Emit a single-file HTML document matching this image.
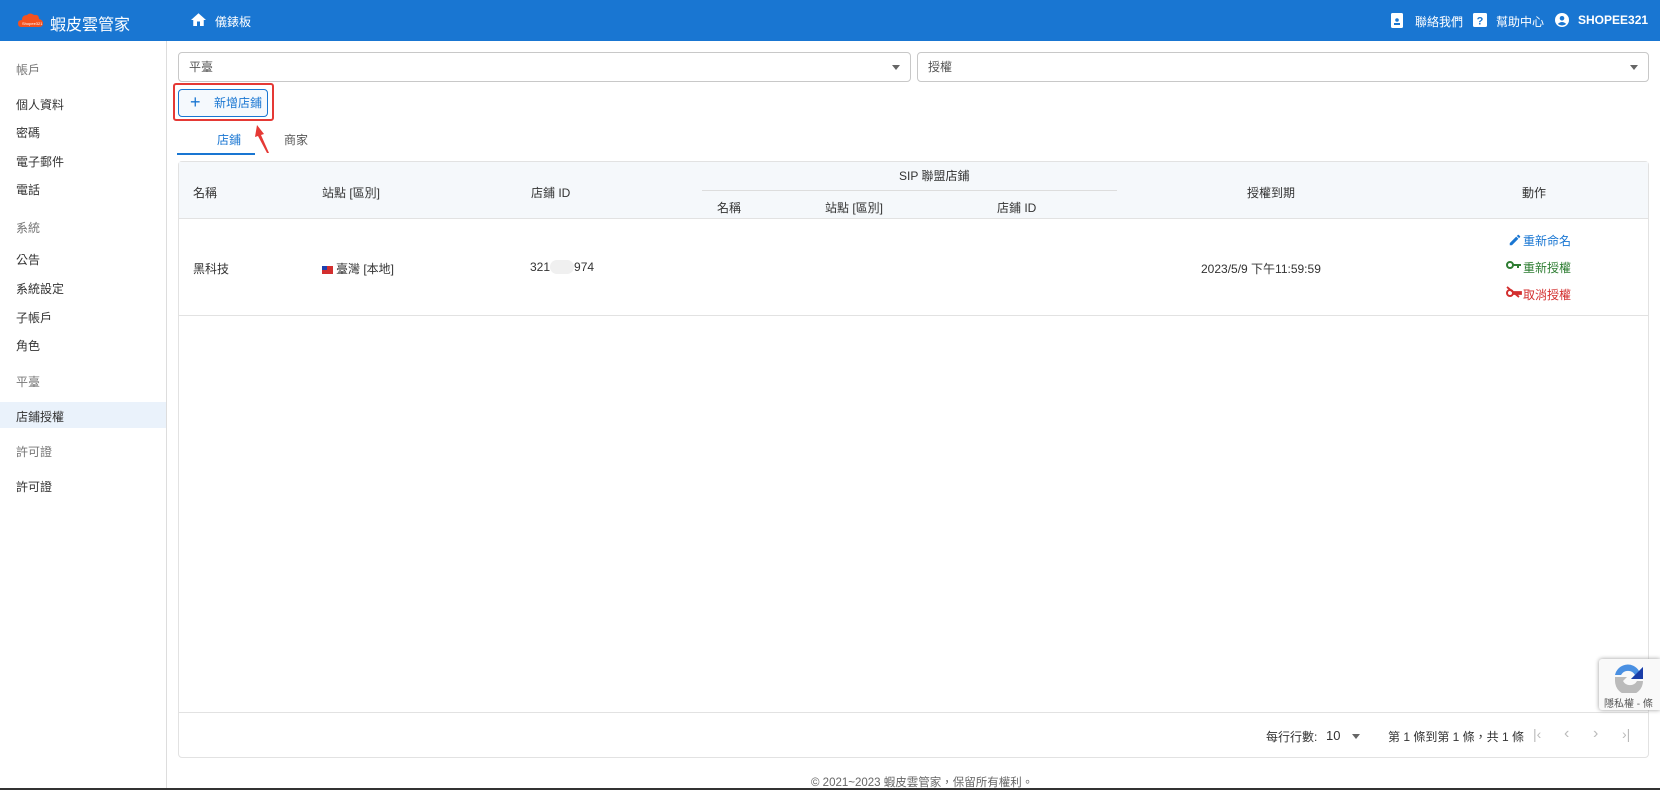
<!DOCTYPE html>
<html><head><meta charset="utf-8"><style>
*{box-sizing:border-box;margin:0;padding:0}
body{width:1660px;height:790px;overflow:hidden;background:#fff;font-family:"Liberation Sans","Noto Sans CJK TC",sans-serif;font-size:12px;color:#333;position:relative}
.abs{position:absolute;white-space:nowrap}
.hdr{position:absolute;left:0;top:0;width:1660px;height:41px;background:#1976d2;color:#fff}
.side{position:absolute;left:0;top:41px;width:167px;height:748px;border-right:1px solid #ddd}
.sel{position:absolute;top:52px;height:30px;border:1px solid #c8c8c8;border-radius:4px;color:#555;padding:0 10px;line-height:28px;font-size:12px}
.tri{position:absolute;right:10px;top:12px;width:0;height:0;border-left:4px solid transparent;border-right:4px solid transparent;border-top:5px solid #666}
.card{position:absolute;left:178px;top:161px;width:1471px;height:597px;border:1px solid #e2e2e2;border-radius:4px}
</style></head><body>
<div class="hdr">
  <svg class="abs" style="left:18px;top:12px" width="25" height="16" viewBox="0 0 25 16"><path d="M3 15 Q0 15 0 11 Q0 8 4 8 Q4 3 9 3 Q12 0 16 3 Q21 2 21 7 Q25 8 25 11 Q25 15 21 15Z" fill="#f4511e"/><text x="4" y="13" font-size="4" fill="#fff" font-family="Liberation Sans">Shopee321</text></svg>
  <div class="abs" style="left:50px;top:11px;font-size:16px">蝦皮雲管家</div>
  <svg class="abs" style="left:191px;top:13px" width="15" height="14" viewBox="0 0 20 18"><path d="M8 17v-6h4v6h5V9h3L10 0 0 9h3v8z" fill="#fff"/></svg>
  <div class="abs" style="left:215px;top:13px;font-size:12px">儀錶板</div>
  <svg class="abs" style="left:1391px;top:13px" width="12" height="15" viewBox="0 0 12 15"><rect width="12" height="15" rx="1.5" fill="#fff"/><circle cx="6" cy="7" r="1.8" fill="#1976d2"/><rect x="3" y="10" width="6" height="2" fill="#1976d2"/></svg>
  <div class="abs" style="left:1415px;top:13px">聯絡我們</div>
  <svg class="abs" style="left:1473px;top:13px" width="14" height="14" viewBox="0 0 14 14"><rect width="14" height="14" rx="1.5" fill="#fff"/><text x="7" y="11.5" font-size="11" text-anchor="middle" fill="#1976d2" font-weight="bold" font-family="Liberation Sans">?</text></svg>
  <div class="abs" style="left:1496px;top:13px">幫助中心</div>
  <svg class="abs" style="left:1555px;top:13px" width="14" height="14" viewBox="0 0 14 14"><circle cx="7" cy="7" r="7" fill="#fff"/><circle cx="7" cy="5.3" r="2.3" fill="#1976d2"/><path d="M2.8 11 Q7 7 11.2 11 Q7 14 2.8 11Z" fill="#1976d2"/></svg>
  <div class="abs" style="left:1578px;top:13px;font-weight:bold">SHOPEE321</div>
</div>
<div class="side">
  <div class="abs" style="left:0;top:361px;width:166px;height:26px;background:#eaf2fb"></div>
  <div class="abs" style="left:16px;top:20px;color:#777">帳戶</div>
  <div class="abs" style="left:16px;top:55px">個人資料</div>
  <div class="abs" style="left:16px;top:83px">密碼</div>
  <div class="abs" style="left:16px;top:112px">電子郵件</div>
  <div class="abs" style="left:16px;top:140px">電話</div>
  <div class="abs" style="left:16px;top:178px;color:#777">系統</div>
  <div class="abs" style="left:16px;top:210px">公告</div>
  <div class="abs" style="left:16px;top:239px">系統設定</div>
  <div class="abs" style="left:16px;top:268px">子帳戶</div>
  <div class="abs" style="left:16px;top:296px">角色</div>
  <div class="abs" style="left:16px;top:332px;color:#777">平臺</div>
  <div class="abs" style="left:16px;top:367px">店鋪授權</div>
  <div class="abs" style="left:16px;top:402px;color:#777">許可證</div>
  <div class="abs" style="left:16px;top:437px">許可證</div>
</div>
<div class="sel" style="left:178px;width:733px">平臺<div class="tri"></div></div>
<div class="sel" style="left:917px;width:732px">授權<div class="tri"></div></div>
<div class="abs" style="left:173px;top:83px;width:101px;height:38px;border:2px solid #e53935;border-radius:3px"></div>
<div class="abs" style="left:178px;top:89px;width:90px;height:28px;border:1px solid #1976d2;border-radius:4px;background:#f5f9fd;color:#1976d2;line-height:26px;padding-left:35px">新增店鋪</div>
<div class="abs" style="left:190px;top:94px;color:#1976d2;font-size:18px;line-height:16px">+</div>
<svg class="abs" style="left:255px;top:122px" width="16" height="32" viewBox="0 0 16 32"><path d="M2 3 L9 12 L6 13 L14 31 L12 31 L3 14 L0 15Z" fill="#e53935"/></svg>
<div class="abs" style="left:217px;top:131px;color:#1976d2">店鋪</div>
<div class="abs" style="left:177px;top:153px;width:78px;height:2px;background:#1976d2"></div>
<div class="abs" style="left:284px;top:131px;color:#555">商家</div>
<div class="card">
  <div class="abs" style="left:0;top:0;width:1469px;height:57px;background:#f5f8fb;border-bottom:1px solid #e2e2e2"></div>
  <div class="abs" style="left:14px;top:22px">名稱</div>
  <div class="abs" style="left:143px;top:22px">站點 [區別]</div>
  <div class="abs" style="left:352px;top:22px">店鋪 ID</div>
  <div class="abs" style="left:720px;top:5px">SIP 聯盟店鋪</div>
  <div class="abs" style="left:523px;top:28px;width:415px;height:1px;background:#ddd"></div>
  <div class="abs" style="left:538px;top:37px">名稱</div>
  <div class="abs" style="left:646px;top:37px">站點 [區別]</div>
  <div class="abs" style="left:818px;top:37px">店鋪 ID</div>
  <div class="abs" style="left:1068px;top:22px">授權到期</div>
  <div class="abs" style="left:1343px;top:22px">動作</div>
  <div class="abs" style="left:0;top:153px;width:1469px;height:1px;background:#e2e2e2"></div>
  <div class="abs" style="left:14px;top:98px">黑科技</div>
  <div class="abs" style="left:143px;top:98px"><span style="display:inline-block;width:11px;height:8px;background:#d32f2f;position:relative;vertical-align:-1px;margin-right:3px"><span style="position:absolute;left:0;top:0;width:5px;height:4px;background:#1e40af"></span></span>臺灣 [本地]</div>
  <div class="abs" style="left:351px;top:98px">321<span style="display:inline-block;width:24px;height:14px;background:#f0f0f0;border-radius:10px;vertical-align:-3px"></span>974</div>
  <div class="abs" style="left:1022px;top:98px">2023/5/9 下午11:59:59</div>
  <svg class="abs" style="left:1329px;top:71px" width="14" height="14" viewBox="0 0 24 24"><path d="M3 17.25V21h3.75L17.81 9.94l-3.75-3.75L3 17.25zM20.71 7.04a1 1 0 000-1.41l-2.34-2.34a1 1 0 00-1.41 0l-1.83 1.83 3.75 3.75 1.83-1.83z" fill="#1976d2"/></svg>
  <div class="abs" style="left:1344px;top:70px;color:#1976d2">重新命名</div>
  <svg class="abs" style="left:1327px;top:98px" width="16" height="10" viewBox="0 0 16 10"><circle cx="4" cy="5" r="3" fill="none" stroke="#2e7d32" stroke-width="2"/><path d="M7 4h8v2h-2v2h-2V6H7z" fill="#2e7d32"/></svg>
  <div class="abs" style="left:1344px;top:97px;color:#2e7d32">重新授權</div>
  <svg class="abs" style="left:1327px;top:124px" width="16" height="12" viewBox="0 0 16 12"><circle cx="4" cy="7" r="3" fill="none" stroke="#d32f2f" stroke-width="2"/><path d="M7 6h8v2H7z M1 1l12 10" stroke="#d32f2f" stroke-width="1.8" fill="#d32f2f"/></svg>
  <div class="abs" style="left:1344px;top:124px;color:#d32f2f">取消授權</div>
  <div class="abs" style="left:0;top:550px;width:1469px;height:1px;background:#e2e2e2"></div>
  <div class="abs" style="left:1087px;top:566px">每行行數:</div>
  <div class="abs" style="left:1147px;top:566px;font-size:13px">10</div>
  <div class="abs" style="left:1173px;top:572px;border-left:4px solid transparent;border-right:4px solid transparent;border-top:5px solid #666"></div>
  <div class="abs" style="left:1209px;top:566px">第 1 條到第 1 條，共 1 條</div>
  <div class="abs" style="left:1354px;top:564px;color:#bbb;font-size:14px">|&lsaquo;</div>
  <div class="abs" style="left:1385px;top:563px;color:#bbb;font-size:16px">&lsaquo;</div>
  <div class="abs" style="left:1414px;top:563px;color:#bbb;font-size:16px">&rsaquo;</div>
  <div class="abs" style="left:1443px;top:564px;color:#bbb;font-size:14px">&rsaquo;|</div>
</div>
<div class="abs" style="left:811px;top:774px;color:#666;font-size:11.5px">© 2021~2023 蝦皮雲管家，保留所有權利。</div>
<div class="abs" style="left:0;top:788px;width:1660px;height:2px;background:#333"></div>
<div class="abs" style="left:1599px;top:659px;width:61px;height:51px;background:#f9f9f9;box-shadow:0 0 4px #999;border-radius:3px 0 0 3px">
  <svg class="abs" style="left:14px;top:4px" width="32" height="30" viewBox="0 0 32 30"><path d="M2 12 A13 13 0 0 1 26 8 L30 4 V16 H18 L22 12 A8 8 0 0 0 8 12Z" fill="#4a90e2"/><path d="M26 8 L30 4 V16 H18Z" fill="#1a3da8"/><path d="M2 14 H14 L10 18 A8 8 0 0 0 24 18 H30 A13 13 0 0 1 2 18Z" fill="#bbb"/></svg>
  <div class="abs" style="left:5px;top:36px;font-size:10px;color:#555">隱私權 - 條</div>
</div>
</body></html>
